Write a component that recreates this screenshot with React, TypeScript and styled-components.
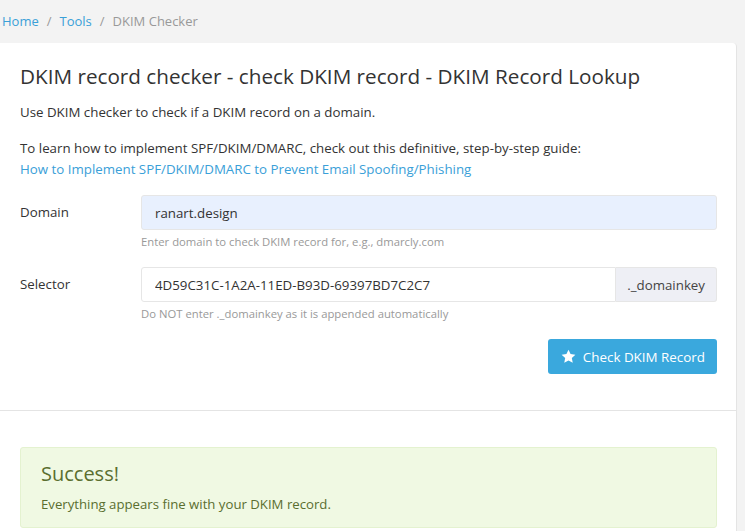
import React from 'react';
import styled, {createGlobalStyle} from 'styled-components';

const GlobalStyle = createGlobalStyle`
    html, body {
        margin: 0;
        padding: 0;
        background: #f3f3f3;
        font-family: 'Open Sans', 'Liberation Sans', sans-serif;
        color: #333;
        overflow: hidden;
    }
    * {
        box-sizing: border-box;
    }
`;

const App: React.FC = function () {
    return (
        <Page>
            <GlobalStyle />
            <Breadcrumb>
                <Crumb href="#">Home</Crumb>
                <Sep>/</Sep>
                <Crumb href="#">Tools</Crumb>
                <Sep>/</Sep>
                <Current>DKIM Checker</Current>
            </Breadcrumb>
            <Card>
                <CardBody>
                    <Title>DKIM record checker - check DKIM record - DKIM Record Lookup</Title>
                    <Para>Use DKIM checker to check if a DKIM record on a domain.</Para>
                    <Para>
                        To learn how to implement SPF/DKIM/DMARC, check out this definitive, step-by-step guide:
                        <br />
                        <GuideLink href="#">How to Implement SPF/DKIM/DMARC to Prevent Email Spoofing/Phishing</GuideLink>
                    </Para>
                    <FormRow>
                        <Label>Domain</Label>
                        <Field>
                            <Input $autofill defaultValue="ranart.design" />
                            <Help>Enter domain to check DKIM record for, e.g., dmarcly.com</Help>
                        </Field>
                    </FormRow>
                    <FormRow>
                        <Label>Selector</Label>
                        <Field>
                            <InputGroup>
                                <Input $grouped defaultValue="4D59C31C-1A2A-11ED-B93D-69397BD7C2C7" />
                                <Addon>._domainkey</Addon>
                            </InputGroup>
                            <Help>Do NOT enter ._domainkey as it is appended automatically</Help>
                        </Field>
                    </FormRow>
                    <Actions>
                        <CheckButton>
                            <svg width="15" height="15" viewBox="0 0 24 24" fill="#fff">
                                <path d="M12 1l3.3 7.1 7.7.9-5.7 5.3 1.5 7.7L12 18.2 5.2 22l1.5-7.7L1 9l7.7-.9z" />
                            </svg>
                            Check DKIM Record
                        </CheckButton>
                    </Actions>
                </CardBody>
                <Divider />
                <ResultBody>
                    <Alert>
                        <AlertTitle>Success!</AlertTitle>
                        <AlertText>Everything appears fine with your DKIM record.</AlertText>
                    </Alert>
                </ResultBody>
            </Card>
        </Page>
    );
};

/* Styled components */

const Page = styled.div`
    width: 745px;
    height: 531px;
    padding-right: 8px;
    display: flex;
    flex-direction: column;
`;

const Breadcrumb = styled.nav`
    height: 43px;
    display: flex;
    align-items: center;
    padding: 0 0 2px 2px;
    font-size: 13px;
`;

const Crumb = styled.a`
    color: #3aa0d8;
    text-decoration: none;
`;

const Sep = styled.span`
    color: #999;
    margin: 0 8px;
`;

const Current = styled.span`
    color: #999;
`;

const Card = styled.div`
    flex: 1;
    background: #fff;
    border-right: 1px solid #e4e4e4;
    border-top-right-radius: 4px;
`;

const CardBody = styled.div`
    padding: 20px 19px 36px 20px;
`;

const Title = styled.h1`
    margin: 0 0 13px;
    font-size: 20.7px;
    font-weight: 400;
    line-height: 26px;
    color: #333;
`;

const Para = styled.p`
    margin: 0 0 15px;
    font-size: 13.3px;
    line-height: 21px;
    color: #333;
`;

const GuideLink = styled.a`
    color: #3aa0d8;
    text-decoration: none;
`;

const FormRow = styled.div`
    display: flex;
    margin-bottom: 17px;
`;

const Label = styled.label`
    width: 121px;
    flex-shrink: 0;
    font-size: 13.3px;
    line-height: 35px;
    color: #333;
`;

const Field = styled.div`
    flex: 1;
`;

const InputGroup = styled.div`
    display: flex;
`;

const Input = styled.input<{$autofill?: boolean; $grouped?: boolean}>`
    flex: 1;
    width: 100%;
    height: 35px;
    padding: 0 13px;
    border: 1px solid #e6e6e6;
    border-radius: ${p => (p.$grouped ? '3px 0 0 3px' : '3px')};
    background: ${p => (p.$autofill ? '#e8f0fe' : '#fff')};
    font-family: inherit;
    font-size: 13.3px;
    color: #333;
    outline: none;
`;

const Addon = styled.span`
    display: flex;
    align-items: center;
    padding: 0 11px;
    height: 35px;
    background: #eeeff5;
    border: 1px solid #e6e6e6;
    border-left: none;
    border-radius: 0 3px 3px 0;
    font-size: 13.3px;
    color: #444;
`;

const Help = styled.div`
    margin-top: 4px;
    font-size: 11.3px;
    line-height: 16px;
    color: #999;
`;

const Actions = styled.div`
    display: flex;
    justify-content: flex-end;
    margin-top: 2px;
`;

const CheckButton = styled.button`
    display: flex;
    align-items: center;
    gap: 7px;
    height: 35px;
    padding: 0 12px 0 13px;
    background: #3aa8dd;
    border: none;
    border-radius: 3px;
    color: #fff;
    font-family: inherit;
    font-size: 13.4px;
`;

const Divider = styled.hr`
    margin: 0;
    border: none;
    border-top: 1px solid #e4e4e4;
`;

const ResultBody = styled.div`
    padding: 36px 19px 0 20px;
`;

const Alert = styled.div`
    background: #f0f9e3;
    border: 1px solid #e4f2d0;
    border-radius: 3px;
    padding: 13px 20px 14px;
`;

const AlertTitle = styled.h4`
    margin: 0 0 8px;
    font-size: 20px;
    font-weight: 400;
    line-height: 26px;
    color: #5a6e2f;
`;

const AlertText = styled.div`
    font-size: 13.2px;
    line-height: 18px;
    color: #5a6e2f;
`;

export default App;
